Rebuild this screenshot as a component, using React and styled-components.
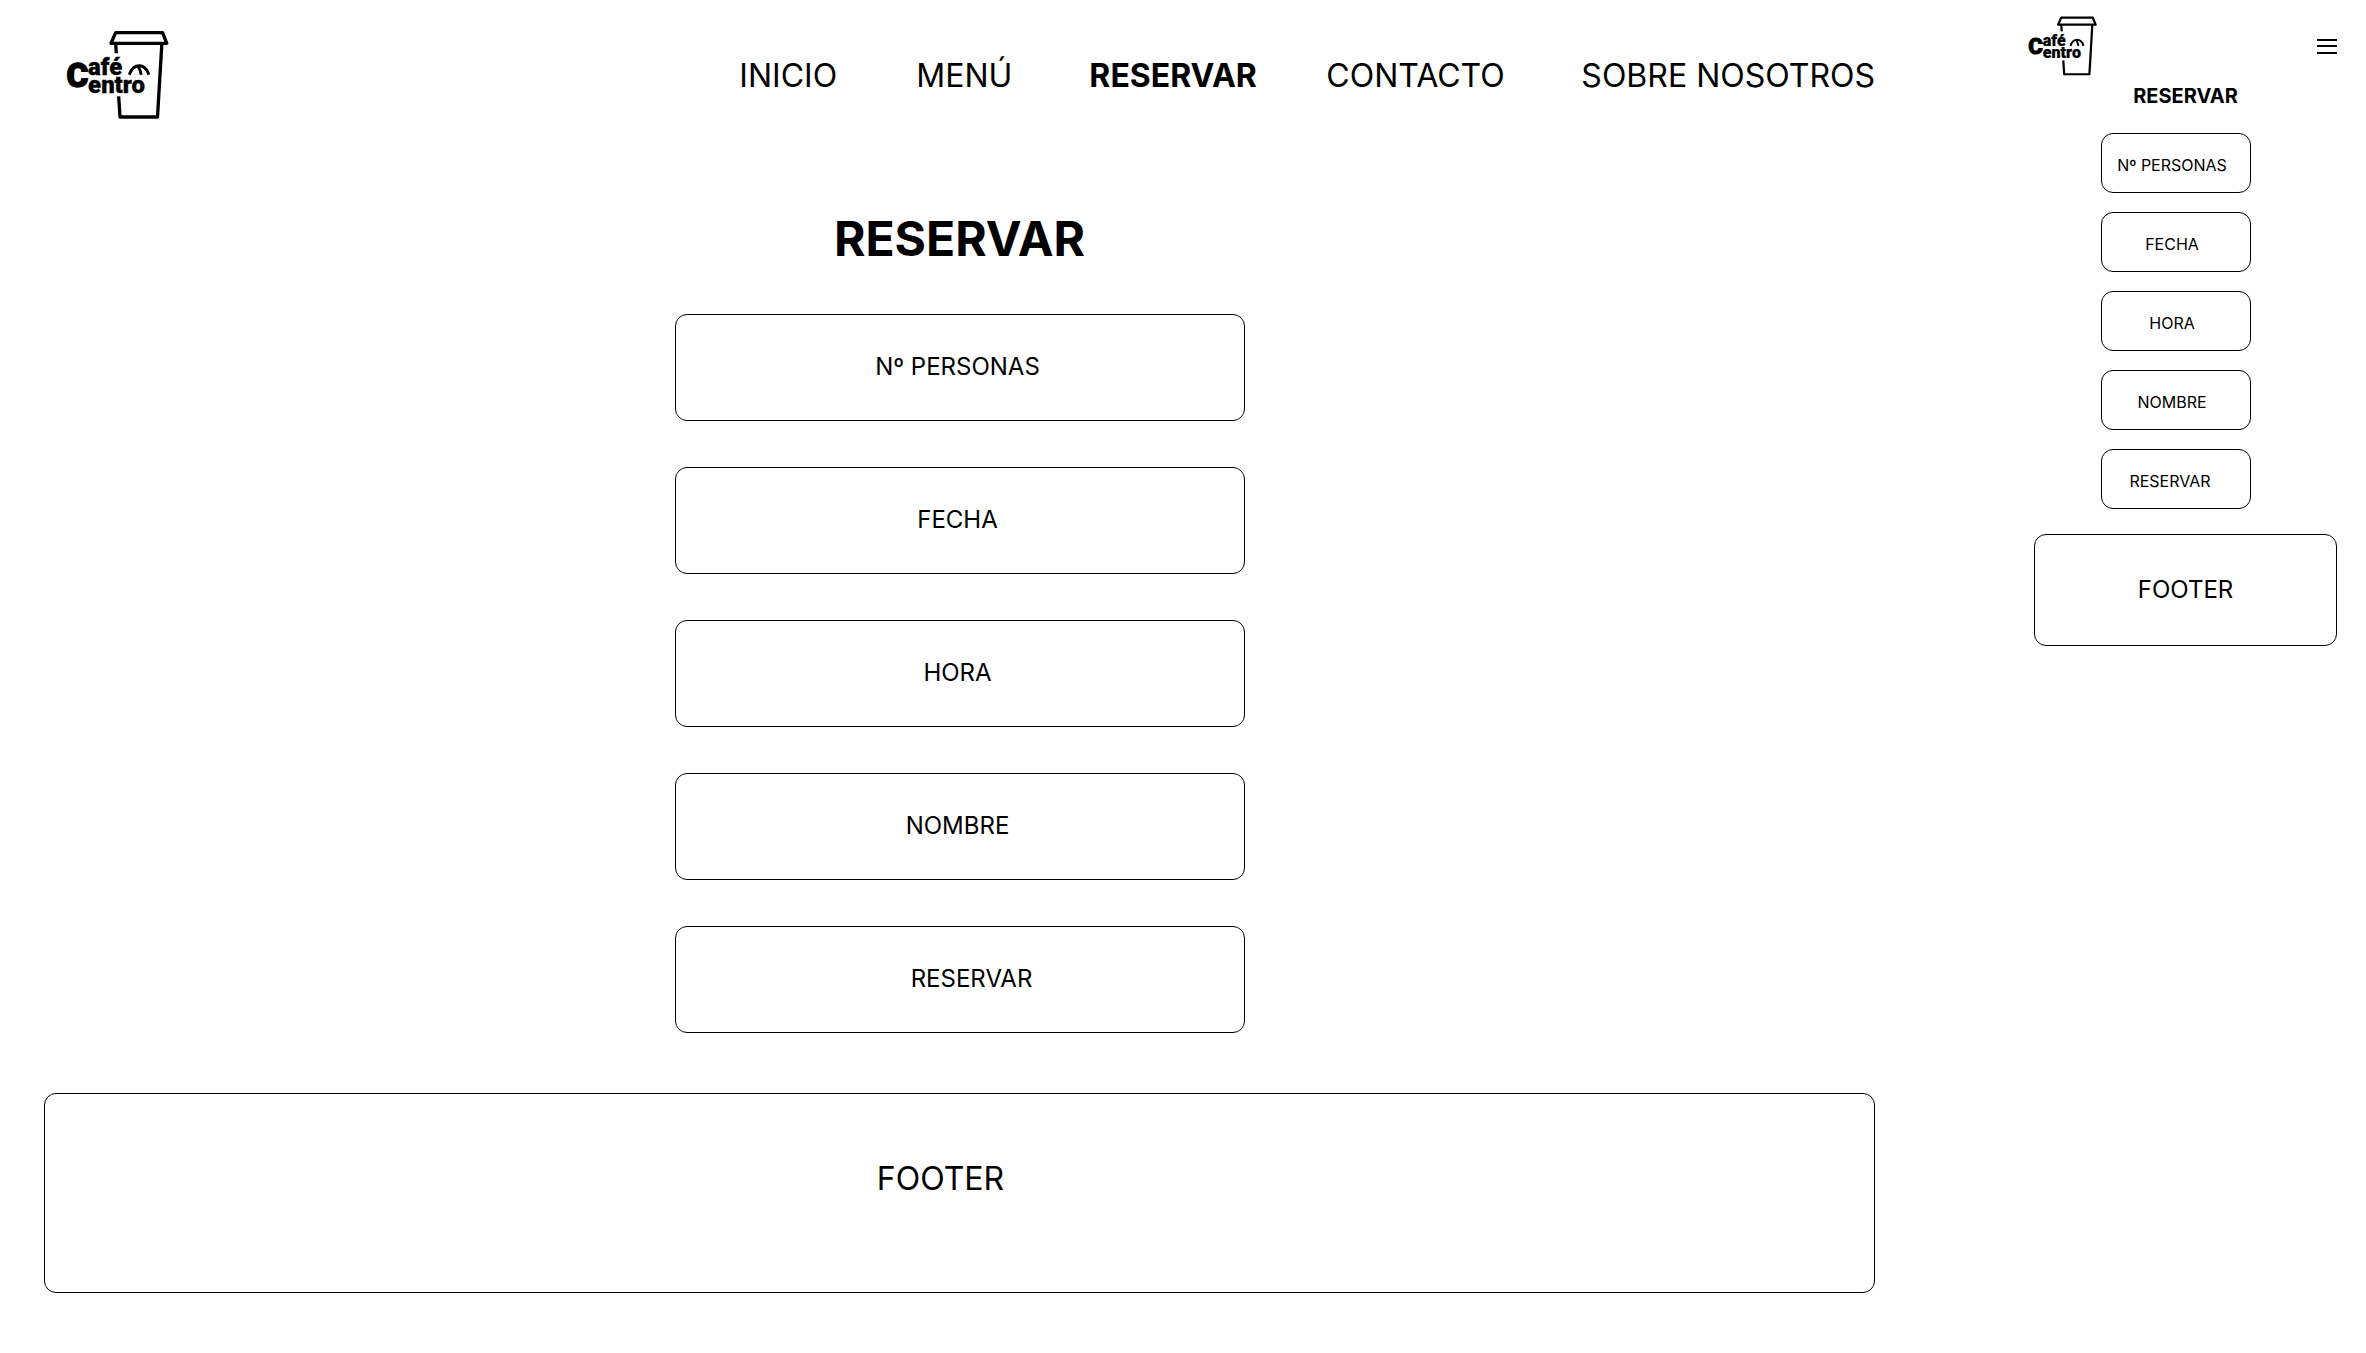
import React from "react";
import styled, { createGlobalStyle } from "styled-components";

const GlobalStyle = createGlobalStyle`
  *, *::before, *::after { box-sizing: border-box; }
  body {
    margin: 0;
    background: #fff;
    color: #000;
    font-family: Inter, "Liberation Sans", sans-serif;
  }
`;

const Page = styled.div`
  display: grid;
  grid-template-columns: minmax(0, 1fr) 307px;
  column-gap: 155px;
  align-items: start;
  padding: 0 29px 60px 44px;
`;

const Column = styled.div`
  display: flex;
  flex-direction: column;
`;

const Header = styled.header`
  display: flex;
  align-items: center;
  justify-content: space-between;
  padding: ${(p) => (p.$compact ? "16px 0 0" : "31px 0 0 25px")};
`;

const LogoImage = styled.svg`
  display: block;
  flex: none;
  width: ${(p) => (p.$compact ? 67 : 100)}px;
  height: ${(p) => (p.$compact ? 60 : 88)}px;
  overflow: visible;
`;

const LogoText = styled.text`
  font-family: Roboto, "Liberation Sans", sans-serif;
  font-weight: 900;
  font-size: ${(p) => (p.$initial ? 100 : 72)}px;
  stroke: #000;
  stroke-width: ${(p) => (p.$initial ? 4 : 1)}px;
`;

const Nav = styled.nav`
  display: grid;
  grid-template-columns: 177px 173px 237px 255px auto;
  padding-top: 2px;
`;

const NavLink = styled.a`
  color: inherit;
  font-size: 32px;
  line-height: 40px;
  font-weight: ${(p) => (p.$active ? 700 : 400)};
  text-decoration: none;
  white-space: nowrap;
`;

const MenuButton = styled.button`
  display: flex;
  padding: 0;
  border: 0;
  background: none;
  color: inherit;
  cursor: pointer;
`;

const Content = styled.main`
  display: flex;
  flex-direction: column;
  align-items: center;
  padding: ${(p) => (p.$compact ? "8px 0 0 4px" : "91px 0 0")};
`;

const Title = styled.h1`
  margin: 0;
  font-size: ${(p) => (p.$compact ? 20 : 48)}px;
  line-height: ${(p) => (p.$compact ? 24 : 58)}px;
  font-weight: 700;
`;

const Form = styled.form`
  display: flex;
  flex-direction: column;
  gap: ${(p) => (p.$compact ? 19 : 46)}px;
  width: ${(p) => (p.$compact ? 150 : 570)}px;
  margin: ${(p) => (p.$compact ? "25px 19px 25px 0" : "46px 0 60px")};
`;

const Field = styled.input`
  width: 100%;
  height: ${(p) => (p.$compact ? 60 : 107)}px;
  padding: ${(p) => (p.$compact ? "4px 8px 0 0" : "0 4px 2px 0")};
  border: 1px solid #000;
  border-radius: 12px;
  background: #fff;
  color: #000;
  font-family: inherit;
  font-size: ${(p) => (p.$compact ? 16 : 24)}px;
  text-align: center;

  &::placeholder {
    color: #000;
    opacity: 1;
  }
`;

const SubmitButton = styled.button`
  height: ${(p) => (p.$compact ? 60 : 107)}px;
  padding: ${(p) => (p.$compact ? "4px 12px 0 0" : "0 0 2px 24px")};
  border: 1px solid #000;
  border-radius: 12px;
  background: #fff;
  color: #000;
  font-family: inherit;
  font-size: ${(p) => (p.$compact ? 16 : 24)}px;
  cursor: pointer;
`;

const Footer = styled.footer`
  display: flex;
  align-items: center;
  justify-content: center;
  height: ${(p) => (p.$compact ? 112 : 200)}px;
  margin-left: ${(p) => (p.$compact ? 4 : 0)}px;
  padding: ${(p) => (p.$compact ? "0 0 2px" : "0 38px 30px 0")};
  border: 1px solid #000;
  border-radius: 12px;
  font-size: ${(p) => (p.$compact ? 24 : 32)}px;
`;

const links = ["INICIO", "MENÚ", "RESERVAR", "CONTACTO", "SOBRE NOSOTROS"];
const fields = [
  { name: "personas", label: "Nº PERSONAS" },
  { name: "fecha", label: "FECHA" },
  { name: "hora", label: "HORA" },
  { name: "nombre", label: "NOMBRE" },
];

function Logo({ compact }) {
  return (
    <LogoImage $compact={compact} viewBox="0 0 300 265" role="img" aria-label="Café Centro">
      <g fill="none" stroke="#000" strokeWidth="10" strokeLinejoin="round">
        <path d="M140 5H281L294 37H126Z" />
        <path d="M140 38L142 67" />
        <path d="M279 38L266 259H153L149 197" />
      </g>
      <g fill="none" stroke="#000" strokeWidth="9">
        <path d="M181 132C188 112 198 105 211 105C224 105 233 112 240 132" />
        <path d="M207 106C212 113 215 121 217 132" />
      </g>
      <LogoText $initial x="-8" y="168">C</LogoText>
      <LogoText x="57" y="132">afé</LogoText>
      <LogoText x="57" y="186">entro</LogoText>
    </LogoImage>
  );
}

function Booking({ compact }) {
  return (
    <Content $compact={compact}>
      <Title $compact={compact}>RESERVAR</Title>
      <Form $compact={compact} onSubmit={(e) => e.preventDefault()}>
        {fields.map((f) => (
          <Field
            key={f.name}
            $compact={compact}
            type="text"
            name={f.name}
            aria-label={f.label}
            placeholder={f.label}
          />
        ))}
        <SubmitButton $compact={compact} type="submit">RESERVAR</SubmitButton>
      </Form>
    </Content>
  );
}

export default function App() {
  return (
    <>
      <GlobalStyle />
      <Page>
        <Column>
          <Header>
            <Logo />
            <Nav>
              {links.map((text) => (
                <NavLink key={text} href="#" $active={text === "RESERVAR"}>{text}</NavLink>
              ))}
            </Nav>
          </Header>
          <Booking />
          <Footer>FOOTER</Footer>
        </Column>
        <Column>
          <Header $compact>
            <Logo compact />
            <MenuButton type="button" aria-label="Menú">
              <svg width="20" height="15" viewBox="0 0 20 15" aria-hidden="true">
                <path d="M0 1H20M0 7H20M0 14H20" stroke="#000" strokeWidth="2" />
              </svg>
            </MenuButton>
          </Header>
          <Booking compact />
          <Footer $compact>FOOTER</Footer>
        </Column>
      </Page>
    </>
  );
}
